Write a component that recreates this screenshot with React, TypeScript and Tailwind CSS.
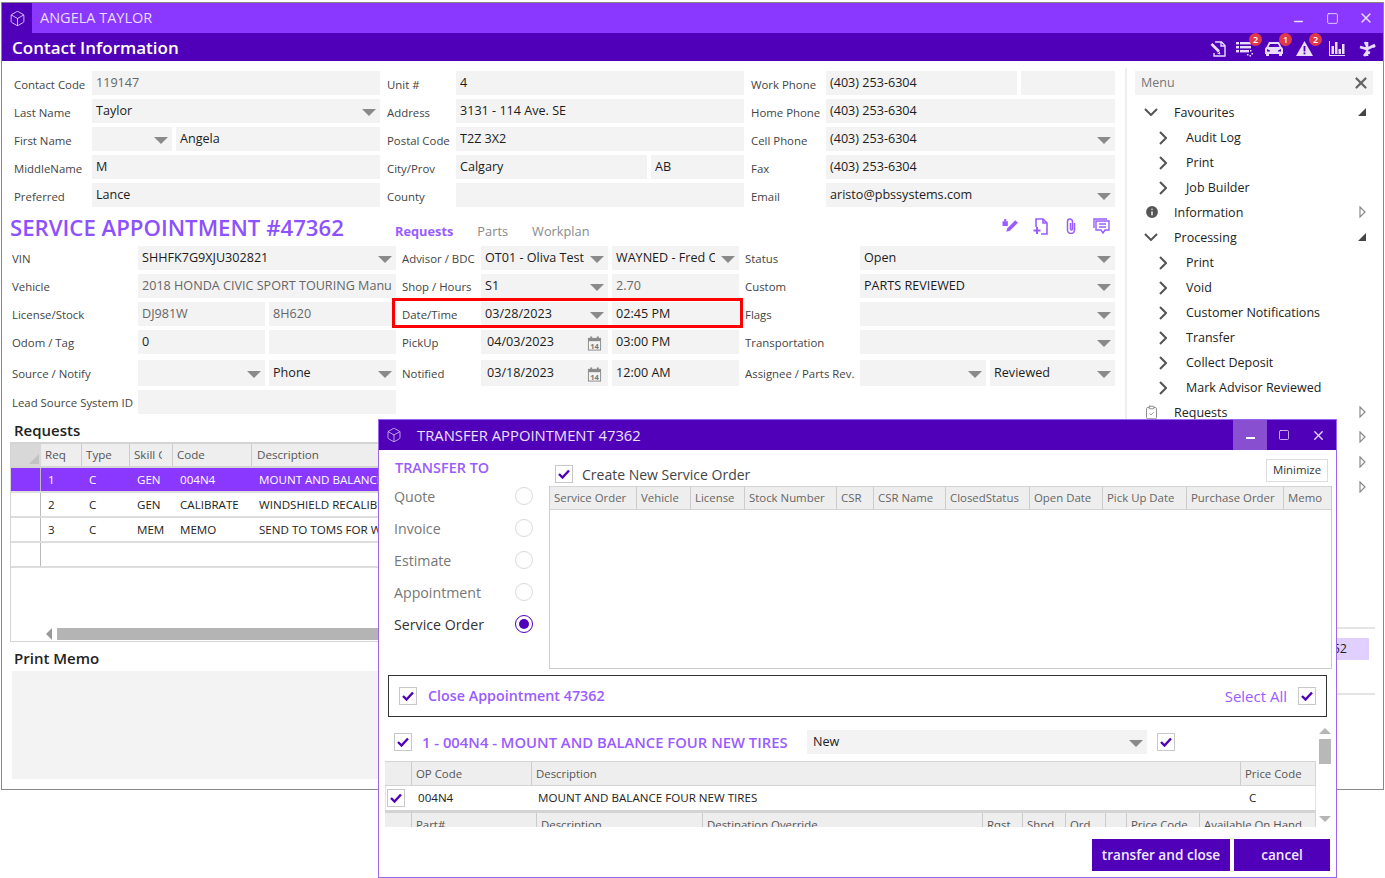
import React from 'react';
import { Box, Minus, Square, X, Info, ClipboardCheck } from 'lucide-react';

const Arrow = ({ className = '' }: { className?: string }) => (
  <svg width="14" height="7" viewBox="0 0 14 7" className={`shrink-0 ${className}`}><path d="M0 0h14L7 7z" fill="#8a8a8a" /></svg>
);

const Calendar = () => (
  <svg width="15" height="15" viewBox="0 0 16 16" className="shrink-0 mt-[2px] mr-[2px]" fill="none">
    <rect x="1.5" y="2.5" width="13" height="12.5" stroke="#8a8a8a" />
    <rect x="1.5" y="2.5" width="13" height="3" fill="#8a8a8a" />
    <rect x="3.5" y="0.5" width="2" height="3" fill="#8a8a8a" />
    <rect x="10.5" y="0.5" width="2" height="3" fill="#8a8a8a" />
    <text x="8" y="13.5" textAnchor="middle" fontSize="8" fontWeight="700" fill="#777" fontFamily="Open Sans">14</text>
  </svg>
);

const Field = ({ w, value = '', arrow, muted, cal, pad = 'pl-1' }: { w: string; value?: string; arrow?: boolean; muted?: boolean; cal?: boolean; pad?: string }) => (
  <div className={`${w} h-full shrink-0 bg-[#f3f3f3] flex items-center ${pad} pr-1`}>
    <span className={`flex-1 min-w-0 overflow-hidden whitespace-nowrap text-[12.6px] ${arrow ? 'mr-[6px]' : ''} ${muted ? 'text-[#666]' : 'text-[#1c1c1c]'}`}>{value}</span>
    {arrow && <Arrow className="mt-[2px]" />}
    {cal && <Calendar />}
  </div>
);

const Label = ({ w, pt = 'pt-[4px]', children }: { w: string; pt?: string; children: React.ReactNode }) => (
  <div className={`${w} shrink-0 h-full flex items-center ${pt} text-[11.4px] text-[#444] whitespace-nowrap overflow-hidden`}>{children}</div>
);

const CRow = ({ children }: { children: React.ReactNode }) => <div className="flex h-6">{children}</div>;

const ContactForm = () => (
  <div className="flex pl-3 gap-[7px]">
    <div className="flex flex-col gap-1">
      <CRow><Label w="w-[78px]">Contact Code</Label><Field w="w-[288px]" value="119147" muted /></CRow>
      <CRow><Label w="w-[78px]">Last Name</Label><Field w="w-[288px]" value="Taylor" arrow /></CRow>
      <CRow><Label w="w-[78px]">First Name</Label><Field w="w-[80px]" arrow /><div className="w-1" /><Field w="w-[204px]" value="Angela" /></CRow>
      <CRow><Label w="w-[78px]">MiddleName</Label><Field w="w-[288px]" value="M" /></CRow>
      <CRow><Label w="w-[78px]">Preferred</Label><Field w="w-[288px]" value="Lance" /></CRow>
    </div>
    <div className="flex flex-col gap-1">
      <CRow><Label w="w-[69px]">Unit #</Label><Field w="w-[288px]" value="4" /></CRow>
      <CRow><Label w="w-[69px]">Address</Label><Field w="w-[288px]" value="3131 - 114 Ave. SE" /></CRow>
      <CRow><Label w="w-[69px]">Postal Code</Label><Field w="w-[288px]" value="T2Z 3X2" /></CRow>
      <CRow><Label w="w-[69px]">City/Prov</Label><Field w="w-[191px]" value="Calgary" /><div className="w-1" /><Field w="w-[93px]" value="AB" /></CRow>
      <CRow><Label w="w-[69px]">County</Label><Field w="w-[288px]" /></CRow>
    </div>
    <div className="flex flex-col gap-1">
      <CRow><Label w="w-[75px]">Work Phone</Label><Field w="w-[191px]" value="(403) 253-6304" /><div className="w-1" /><Field w="w-[94px]" /></CRow>
      <CRow><Label w="w-[75px]">Home Phone</Label><Field w="w-[289px]" value="(403) 253-6304" /></CRow>
      <CRow><Label w="w-[75px]">Cell Phone</Label><Field w="w-[289px]" value="(403) 253-6304" arrow /></CRow>
      <CRow><Label w="w-[75px]">Fax</Label><Field w="w-[289px]" value="(403) 253-6304" /></CRow>
      <CRow><Label w="w-[75px]">Email</Label><Field w="w-[289px]" value="aristo@pbssystems.com" arrow /></CRow>
    </div>
  </div>
);

const P = '#9a5cff';
const ServiceIcons = () => (
  <div className="ml-auto flex items-center pb-[5px] pr-[11px]">
    <svg width="17" height="16" viewBox="0 0 16 15"><path d="M5 9.500 12.500 2l2.500 2.500L7.500 12 4 13z" fill={P} /><rect x="0.500" y="3" width="5" height="4.500" fill={P} /><rect x="2" y="1" width="2" height="2" fill={P} /></svg>
    <svg width="15" height="17" viewBox="0 0 15 17" fill="none" stroke={P} strokeWidth="1.6" className="ml-[14px]">
      <path d="M3 9V1h7l4 4v11H8" /><path d="M10 1v4h4" /><path d="M0.500 12.500h7M4 9v7" strokeWidth="2" />
    </svg>
    <svg width="10" height="16" viewBox="0 0 10 16" fill="none" stroke={P} strokeWidth="1.5" className="ml-[18px]">
      <path d="M8.500 5v7a3.500 3.500 0 0 1-7 0V3.500a2.500 2.500 0 0 1 5 0V11a1 1 0 0 1-2 0V5" />
    </svg>
    <svg width="17" height="16" viewBox="0 0 17 16" fill="none" stroke={P} strokeWidth="1.4" className="ml-[17px]">
      <path d="M1 10V1h13" /><path d="M3 12V3h13v9h-4l-2 3-2-3z" /><path d="M6 6h7M6 9h7" />
    </svg>
  </div>
);

const ServiceHeader = () => (
  <div className="h-[39px] flex items-center pl-2 pt-[4px]">
    <div className="w-[385px] text-[22.2px] leading-none font-semibold text-[#8d51ff] whitespace-nowrap">SERVICE APPOINTMENT #47362</div>
    <div className="flex gap-[24px] text-[12.8px] text-[#8a8a8a] pt-[7px]">
      <span className="font-bold text-[#9a5cff]">Requests</span>
      <span>Parts</span>
      <span>Workplan</span>
    </div>
    <ServiceIcons />
  </div>
);

const SRow = ({ children, h = 'h-6', mb = 'mb-1' }: { children: React.ReactNode; h?: string; mb?: string }) => (
  <div className={`flex pl-[10px] ${h} ${mb}`}>{children}</div>
);
const ColA = ({ label, children }: { label: string; children: React.ReactNode }) => (
  <div className="flex h-full w-[384px] shrink-0 mr-[6px]"><Label w="w-[126px]" pt="pt-[2px]">{label}</Label>{children}</div>
);
const ColB = ({ label, children }: { label: string; children: React.ReactNode }) => (
  <div className="flex h-full w-[337px] shrink-0 mr-[6px] relative"><Label w="w-[79px]" pt="pt-[2px]">{label}</Label>{children}</div>
);
const ColC = ({ children }: { children: React.ReactNode }) => <Label w="w-[115px]" pt="pt-[2px]">{children}</Label>;
const Gap = () => <div className="w-1 shrink-0" />;

const ServiceForm = () => (
  <div>
    <SRow>
      <ColA label="VIN"><Field w="w-[258px]" value="SHHFK7G9XJU302821" arrow /></ColA>
      <ColB label="Advisor / BDC"><Field w="w-[127px]" value="OT01 - Oliva Test" arrow /><Gap /><Field w="w-[127px]" value="WAYNED - Fred Oliva" arrow /></ColB>
      <ColC>Status</ColC><Field w="w-[255px]" value="Open" arrow />
    </SRow>
    <SRow>
      <ColA label="Vehicle"><Field w="w-[258px]" value="2018 HONDA CIVIC SPORT TOURING Manual" muted /></ColA>
      <ColB label="Shop / Hours"><Field w="w-[127px]" value="S1" arrow /><Gap /><Field w="w-[127px]" value="2.70" muted /></ColB>
      <ColC>Custom</ColC><Field w="w-[255px]" value="PARTS REVIEWED" arrow />
    </SRow>
    <SRow>
      <ColA label="License/Stock"><Field w="w-[127px]" value="DJ981W" muted /><Gap /><Field w="w-[127px]" value="8H620" muted /></ColA>
      <ColB label="Date/Time">
        <Field w="w-[127px]" value="03/28/2023" arrow /><Gap /><Field w="w-[127px]" value="02:45 PM" />
        <div className="absolute -left-[10px] -top-1 w-[351px] h-[30px] border-[3px] border-[#f00]" />
      </ColB>
      <ColC>Flags</ColC><Field w="w-[255px]" arrow />
    </SRow>
    <SRow mb="mb-[6px]">
      <ColA label="Odom / Tag"><Field w="w-[127px]" value="0" /><Gap /><Field w="w-[127px]" /></ColA>
      <ColB label="PickUp"><Field w="w-[127px]" value="04/03/2023" cal pad="pl-1.5" /><Gap /><Field w="w-[127px]" value="03:00 PM" /></ColB>
      <ColC>Transportation</ColC><Field w="w-[255px]" arrow />
    </SRow>
    <SRow h="h-[26px]">
      <ColA label="Source / Notify"><Field w="w-[127px]" arrow /><Gap /><Field w="w-[127px]" value="Phone" arrow /></ColA>
      <ColB label="Notified"><Field w="w-[127px]" value="03/18/2023" cal pad="pl-1.5" /><Gap /><Field w="w-[127px]" value="12:00 AM" /></ColB>
      <ColC>Assignee / Parts Rev.</ColC><Field w="w-[126px]" arrow /><Gap /><Field w="w-[125px]" value="Reviewed" arrow />
    </SRow>
    <SRow mb="mb-0">
      <ColA label="Lead Source System ID"><Field w="w-[258px]" /></ColA>
    </SRow>
  </div>
);

const reqRows = [
  ['1', 'C', 'GEN', '004N4', 'MOUNT AND BALANCE FOUR NEW TIRES'],
  ['2', 'C', 'GEN', 'CALIBRATE', 'WINDSHIELD RECALIBRATION'],
  ['3', 'C', 'MEM', 'MEMO', 'SEND TO TOMS FOR WHEEL ALIGNMENT'],
];
const reqCols = ['w-[41px]', 'w-[48px]', 'w-[43px]', 'w-[79px]', 'flex-1'];

const RequestsTable = () => (
  <div className="ml-2 w-[1100px] h-[200px] border border-[#d4d4d4] border-t-2 flex flex-col overflow-hidden">
    <div className="flex h-[24px] bg-[#eee] shrink-0 border-b-2 border-[#d4d4d4]">
      <div className="w-[30px] shrink-0 bg-[#d8d8d8] flex items-end justify-end pr-[2px] pb-[2px]">
        <svg width="10" height="10" viewBox="0 0 10 10"><path d="M10 0v10H0z" fill="#c2c2c2" /></svg>
      </div>
      {['Req', 'Type', 'Skill Group', 'Code', 'Description'].map((h, i) => (
        <div key={h} className={`${reqCols[i]} shrink-0 border-r border-[#ccc] ${i === 4 ? 'pl-[5px]' : 'pl-1'} flex items-center text-[11.6px] text-[#555] whitespace-nowrap overflow-hidden`}>
          <span className={`block overflow-hidden ${i === 2 ? 'w-[28px]' : ''}`}>{h}</span>
        </div>
      ))}
    </div>
    {reqRows.map((r, ri) => (
      <div key={ri} className={`flex h-[25px] shrink-0 border-b-2 border-[#ddd] ${ri === 0 ? 'bg-[#8a38ff] text-white' : 'text-[#222]'}`}>
        <div className="w-[30px] shrink-0 border-r border-[#bbb]" />
        {r.map((c, i) => (
          <div key={i} className={`${reqCols[i]} shrink-0 pl-[7px] flex items-center text-[11.6px] whitespace-nowrap overflow-hidden`}>{c}</div>
        ))}
      </div>
    ))}
    <div className="flex h-[25px] shrink-0 border-b-2 border-[#ddd]"><div className="w-[30px] border-r border-[#bbb]" /></div>
    <div className="flex-1" />
    <div className="h-[12px] shrink-0 flex items-center pl-[35px] mb-px">
      <svg width="6" height="12" viewBox="0 0 6 12"><path d="M6 0v12L0 6z" fill="#999" /></svg>
      <div className="ml-[5px] h-[12px] flex-1 bg-[#b4b4b4]" />
    </div>
  </div>
);

const ChevDown = () => (
  <svg width="14" height="8" viewBox="0 0 14 8" fill="none"><path d="M1 1l6 6 6-6" stroke="#555" strokeWidth="2" /></svg>
);
const ChevRight = () => (
  <svg width="8" height="14" viewBox="0 0 8 14" fill="none"><path d="M1 1l6 6-6 6" stroke="#555" strokeWidth="2" /></svg>
);
const CornerTri = () => (
  <svg width="8" height="8" viewBox="0 0 8 8"><path d="M8 0v8H0z" fill="#444" /></svg>
);
const OutTri = () => (
  <svg width="7" height="12" viewBox="0 0 7 12" fill="none"><path d="M1 1l5 5-5 5z" stroke="#8a8a8a" strokeWidth="1.2" /></svg>
);

const MenuTop = ({ icon, label, tail }: { icon: React.ReactNode; label: string; tail: React.ReactNode }) => (
  <div className="h-[25px] flex items-center">
    <div className="w-[39px] pl-[9px] mb-[3px] shrink-0 flex items-center">{icon}</div>
    <span className="flex-1 text-[12.5px] text-[#222] whitespace-nowrap">{label}</span>
    <div className="w-[8px] mr-[9px] mb-[3px] flex justify-center">{tail}</div>
  </div>
);
const MenuSub = ({ label }: { label: string }) => (
  <div className="h-[25px] flex items-center">
    <div className="w-[51px] pl-[24px] mb-[2px] shrink-0 flex items-center"><ChevRight /></div>
    <span className="text-[12.5px] text-[#222] whitespace-nowrap">{label}</span>
  </div>
);

const SideMenu = () => (
  <div className="w-[240px] shrink-0 ml-2 pt-[10px] flex flex-col">
    <div className="h-6 w-[238px] bg-[#f3f3f3] flex items-center pl-[6px] pr-[3px] text-[12.5px] text-[#777]">
      <span className="flex-1">Menu</span>
      <X size={18} strokeWidth={3} className="text-[#666]" />
    </div>
    <div className="pt-[6px]">
      <MenuTop icon={<ChevDown />} label="Favourites" tail={<CornerTri />} />
      <MenuSub label="Audit Log" />
      <MenuSub label="Print" />
      <MenuSub label="Job Builder" />
      <MenuTop icon={<Info size={16} fill="#555" stroke="#fff" strokeWidth={2.2} />} label="Information" tail={<OutTri />} />
      <MenuTop icon={<ChevDown />} label="Processing" tail={<CornerTri />} />
      <MenuSub label="Print" />
      <MenuSub label="Void" />
      <MenuSub label="Customer Notifications" />
      <MenuSub label="Transfer" />
      <MenuSub label="Collect Deposit" />
      <MenuSub label="Mark Advisor Reviewed" />
      <MenuTop icon={<ClipboardCheck size={15} strokeWidth={1.3} className="text-[#777]" />} label="Requests" tail={<OutTri />} />
      <MenuTop icon={null} label="" tail={<OutTri />} />
      <MenuTop icon={null} label="" tail={<OutTri />} />
      <MenuTop icon={null} label="" tail={<OutTri />} />
    </div>
    <div className="mt-[126px] w-[240px] border-t-2 border-[#e4e4e4] pt-[9px]">
      <div className="w-[234px] h-[22px] bg-[#e1cfff] text-[12.5px] text-[#222] flex items-center justify-end pr-[22px]">52</div>
    </div>
    <div className="mt-[33px] w-[240px] border-t-2 border-[#e4e4e4]" />
  </div>
);

const Badge = ({ n }: { n: number }) => (
  <span className="absolute -top-[8px] -right-[9px] w-[13px] h-[13px] rounded-full bg-[#e0394b] text-white text-[9px] font-semibold flex items-center justify-center leading-none">{n}</span>
);

const C = '#e9dcff';
const ToolIcons = () => (
  <div className="ml-auto flex items-center pr-[7px] pt-[3px]">
    <svg width="16" height="16" viewBox="0 0 16 16" fill="none" stroke={C} strokeWidth="1.4">
      <path d="M5 1h6.500L15 4.500V15H4v-3" /><path d="M11 1v4h4" /><path d="M1.500 3l7.500 7.500" strokeWidth="2.600" /><path d="M9 10.500l1 2.500-2.500-1" strokeWidth="1" />
    </svg>
    <div className="relative ml-[10px]">
      <svg width="17" height="16" viewBox="0 0 17 16" fill={C} className="block">
        <rect x="0" y="1" width="3" height="2.400" /><rect x="4" y="1" width="11" height="2.400" /><rect x="0" y="5" width="3" height="2.400" /><rect x="4" y="5" width="11" height="2.400" /><rect x="0" y="9" width="3" height="2.400" /><rect x="4" y="9" width="9" height="2.400" />
        <rect x="14" y="9" width="1.500" height="1.500" /><rect x="15.500" y="12" width="1.500" height="1.500" /><rect x="11" y="13" width="1.500" height="1.500" /><rect x="13.500" y="14" width="1.500" height="1.500" />
      </svg>
      <Badge n={2} />
    </div>
    <div className="relative ml-[12px]">
      <svg width="18" height="15" viewBox="0 0 18 15" fill={C} className="block">
        <path fillRule="evenodd" d="M4 1h10l2.500 5c1 .5 1.500 1.200 1.500 2.500V13h-1v2h-3v-2H4v2H1v-2H0V8.500C0 7.200.5 6.500 1.500 6zM5 3L3.500 6h11L13 3zM2 8v2.500h3V9.500zM16 8l-3 1.500v1h3z" />
      </svg>
      <Badge n={1} />
    </div>
    <div className="relative ml-[13px]">
      <svg width="17" height="15" viewBox="0 0 17 15" className="block">
        <path d="M8.500 0L17 15H0z" fill={C} /><rect x="7.600" y="5" width="1.800" height="5.500" fill="#5000b9" /><rect x="7.600" y="11.500" width="1.800" height="1.800" fill="#5000b9" />
      </svg>
      <Badge n={2} />
    </div>
    <svg width="16" height="15" viewBox="0 0 16 15" fill={C} className="ml-[16px]">
      <rect x="0" y="0" width="1" height="15" /><rect x="0" y="14" width="16" height="1" /><rect x="2.500" y="5" width="2.500" height="8" /><rect x="6" y="1" width="2.500" height="12" /><rect x="9.500" y="8" width="2.500" height="5" /><rect x="13" y="3" width="2.500" height="10" />
    </svg>
    <svg width="17" height="16" viewBox="0 0 17 16" fill="none" stroke={C} strokeWidth="2.600" className="ml-[14px]">
      <path d="M8 1v14M1 6l7 2 8-4M6 1l2 4M5 15l3-4 3 1M16 6l-2-2" />
    </svg>
  </div>
);

const Check = ({ className = '' }: { className?: string }) => (
  <div className={`w-[18px] h-[18px] shrink-0 border border-[#c8c8c8] bg-white flex items-center justify-center ${className}`}>
    <svg width="12" height="10" viewBox="0 0 12 10" fill="none"><path d="M1 5l3.500 3.500L11 1.500" stroke="#5000b9" strokeWidth="2.400" /></svg>
  </div>
);

const Radio = ({ on }: { on?: boolean }) => (
  <div className={`w-[18px] h-[18px] mb-[2px] rounded-full ${on ? 'border-[1.5px] border-[#5000b9]' : 'border border-[#d9d9d9]'} bg-white flex items-center justify-center`}>
    {on && <div className="w-[10px] h-[10px] rounded-full bg-[#5000b9]" />}
  </div>
);

const soCols: [string, string][] = [
  ['Service Order', 'w-[87px]'], ['Vehicle', 'w-[54px]'], ['License', 'w-[54px]'], ['Stock Number', 'w-[92px]'], ['CSR', 'w-[37px]'], ['CSR Name', 'w-[72px]'], ['ClosedStatus', 'w-[84px]'], ['Open Date', 'w-[73px]'], ['Pick Up Date', 'w-[84px]'], ['Purchase Order', 'w-[97px]'], ['Memo', 'flex-1'],
];
const partCols: [string, string][] = [
  ['', 'w-[27px]'], ['Part#', 'w-[125px]'], ['Description', 'w-[166px]'], ['Destination Override', 'w-[280px]'], ['Rqst', 'w-[40px]'], ['Shpd', 'w-[43px]'], ['Ord', 'w-[40px]'], ['', 'w-[21px]'], ['Price Code', 'w-[73px]'], ['Available On Hand', 'flex-1'],
];

const Modal = () => (
  <div className="absolute left-[378px] top-[419px] w-[959px] h-[459px] border border-[#9a66f0] bg-white flex flex-col overflow-hidden">
    <div className="h-[30px] shrink-0 bg-[#5000b9] flex items-center">
      <div className="w-[38px] shrink-0 pl-[7px]"><Box size={16} strokeWidth={1.2} className="text-[#d9c8f5]" /></div>
      <span className="text-[14.8px] text-[#ece2ff] whitespace-nowrap">TRANSFER APPOINTMENT 47362</span>
      <div className="ml-auto flex h-full text-[#e3d5ff]">
        <div className="w-[34px] bg-[#8850d0] flex items-center justify-center pt-[6px]"><div className="w-[9px] h-[2px] bg-white" /></div>
        <div className="w-[34px] flex items-center justify-center"><Square size={12} strokeWidth={1.6} /></div>
        <div className="w-[34px] mr-[1px] flex items-center justify-center"><X size={15} strokeWidth={2.2} /></div>
      </div>
    </div>
    <div className="flex h-[219px] shrink-0">
      <div className="w-[170px] shrink-0 pl-[15px]">
        <div className="h-[31px] pl-px pt-[5px] flex items-center text-[14.4px] font-semibold text-[#9a5cff] whitespace-nowrap">TRANSFER TO</div>
        {['Quote', 'Invoice', 'Estimate', 'Appointment', 'Service Order'].map((l, i) => (
          <div key={l} className="h-[32px] w-[139px] flex items-center justify-between">
            <span className={`text-[14.2px] ${i === 4 ? 'text-[#333]' : 'text-[#777]'}`}>{l}</span>
            <Radio on={i === 4} />
          </div>
        ))}
      </div>
      <div className="flex-1 flex flex-col">
        <div className="h-[36px] shrink-0 flex items-center pt-[12px] pl-[6px] pr-[8px]">
          <Check />
          <span className="ml-[9px] text-[14px] text-[#444]">Create New Service Order</span>
          <div className="ml-auto w-[62px] h-[23px] mb-[8px] border border-[#ddd] flex items-center justify-center text-[11.4px] text-[#333]">Minimize</div>
        </div>
        <div className="w-[783px] h-[183px] border-l border-b border-r border-[#ccc]">
          <div className="flex h-6 bg-[#eee] border-b border-t border-[#d4d4d4]">
            {soCols.map(([h, w]) => (
              <div key={h} className={`${w} ${w === 'flex-1' ? '' : 'shrink-0 border-r border-[#ccc]'} pl-1 flex items-center text-[11.4px] text-[#666] whitespace-nowrap overflow-hidden`}>{h}</div>
            ))}
          </div>
        </div>
      </div>
    </div>
    <div className="ml-[9px] mt-[6px] w-[939px] h-[42px] shrink-0 border border-[#333] flex items-center pl-[10px] pr-[10px]">
      <Check />
      <span className="ml-[11px] text-[14.3px] font-semibold text-[#9a5cff]">Close Appointment 47362</span>
      <span className="ml-auto mr-[11px] text-[15px] text-[#9a5cff]">Select All</span>
      <Check />
    </div>
    <div className="flex h-[110px] shrink-0 overflow-hidden pl-[6px]">
      <div className="w-[931px] shrink-0 flex flex-col">
        <div className="h-[24px] mt-[13px] shrink-0 flex items-center">
          <Check className="ml-[9px]" />
          <span className="ml-[10px] w-[385px] text-[14.8px] font-semibold text-[#9a5cff] whitespace-nowrap">1 - 004N4 - MOUNT AND BALANCE FOUR NEW TIRES</span>
          <div className="w-[340px] h-full shrink-0"><Field w="w-[340px]" value="New" arrow pad="pl-1.5" /></div>
          <Check className="ml-[10px]" />
        </div>
        <div className="flex h-[25px] mt-[7px] shrink-0 bg-[#eee] border-t border-b border-[#d4d4d4] border-r">
          {[['', 'w-[27px]'], ['OP Code', 'w-[120px]'], ['Description', 'w-[709px]'], ['Price Code', 'flex-1']].map(([h, w]) => (
            <div key={h || 'blank'} className={`${w} ${w === 'flex-1' ? '' : 'shrink-0 border-r border-[#ccc]'} pl-1 flex items-center text-[11.4px] text-[#555]`}>{h}</div>
          ))}
        </div>
        <div className="flex h-[24px] shrink-0 border-r border-l border-[#e4e4e4] text-[11.6px] text-[#222]">
          <div className="w-[27px] shrink-0 pl-px flex items-center"><Check /></div>
          <div className="w-[119px] shrink-0 pl-[5px] flex items-center">004N4</div>
          <div className="w-[710px] shrink-0 pl-[6px] flex items-center">MOUNT AND BALANCE FOUR NEW TIRES</div>
          <div className="flex-1 pl-[7px] flex items-center">C</div>
        </div>
        <div className="flex h-[22px] shrink-0 bg-[#eee] border-t-[3px] border-r border-[#d4d4d4]">
          {partCols.map(([h, w], i) => (
            <div key={i} className={`${w} ${w === 'flex-1' ? '' : 'shrink-0 border-r border-[#ccc]'} h-[24px] pl-1 flex items-center text-[11.4px] text-[#555] whitespace-nowrap overflow-hidden`}>{h}</div>
          ))}
        </div>
      </div>
      <div className="ml-[3px] w-[12px] flex flex-col items-center pt-[11px]">
        <svg width="12" height="6" viewBox="0 0 12 6"><path d="M0 6h12L6 0z" fill="#b5b5b5" /></svg>
        <div className="mt-[5px] w-[12px] h-[25px] bg-[#b8b8b8]" />
        <svg width="12" height="6" viewBox="0 0 12 6" className="mt-[52px]"><path d="M0 0h12L6 6z" fill="#b5b5b5" /></svg>
      </div>
    </div>
    <div className="flex justify-end gap-1 pt-[12px] pr-[6px]">
      <div className="w-[138px] h-[32px] bg-[#5000b9] flex items-center justify-center text-[13.6px] font-semibold text-[#f1e9ff]">transfer and close</div>
      <div className="w-[96px] h-[32px] bg-[#5000b9] flex items-center justify-center text-[13.6px] font-semibold text-[#f1e9ff]">cancel</div>
    </div>
  </div>
);

export default function App() {
  return (
    <div className="relative w-[1385px] h-[878px] bg-white overflow-hidden font-['Open_Sans','Liberation_Sans',sans-serif]">
      <div className="ml-px mt-[2px] w-[1383px] h-[788px] border border-[#888] flex flex-col overflow-hidden">
        <div className="h-[30px] shrink-0 bg-[#8a38ff] flex items-center text-[#e9dcff]">
          <div className="w-[30px] h-full bg-[#5000b9] flex items-center justify-center"><Box size={17} strokeWidth={1.2} /></div>
          <span className="ml-2 text-[14.5px] whitespace-nowrap">ANGELA TAYLOR</span>
          <div className="ml-auto flex items-center h-full">
            <div className="w-[34px] flex items-center justify-center pt-[7px]"><Minus size={13} strokeWidth={3} /></div>
            <div className="w-[34px] flex items-center justify-center"><Square size={13} strokeWidth={1.6} /></div>
            <div className="w-[34px] flex items-center justify-center"><X size={16} strokeWidth={2.2} /></div>
          </div>
        </div>
        <div className="h-[28px] shrink-0 bg-[#5000b9] flex items-center pl-[10px]">
          <span className="text-[17px] pt-px font-semibold text-white whitespace-nowrap">Contact Information</span>
          <ToolIcons />
        </div>
        <div className="flex flex-1 min-h-0">
          <div className="w-[1119px] shrink-0 pt-[10px] overflow-hidden">
            <ContactForm />
            <ServiceHeader />
            <ServiceForm />
            <div className="h-[28px] pl-3 pt-[5px] flex items-center text-[15px] font-semibold text-[#222]">Requests</div>
            <RequestsTable />
            <div className="h-[29px] pl-3 pt-[4px] flex items-center text-[15px] font-semibold text-[#222]">Print Memo</div>
            <div className="ml-[10px] w-[1100px] h-[108px] bg-[#f3f3f3]" />
          </div>
          <div className="w-[2px] shrink-0 ml-[4px] mt-[7px] bg-[#eee]" />
          <SideMenu />
        </div>
      </div>
      <Modal />
    </div>
  );
}
